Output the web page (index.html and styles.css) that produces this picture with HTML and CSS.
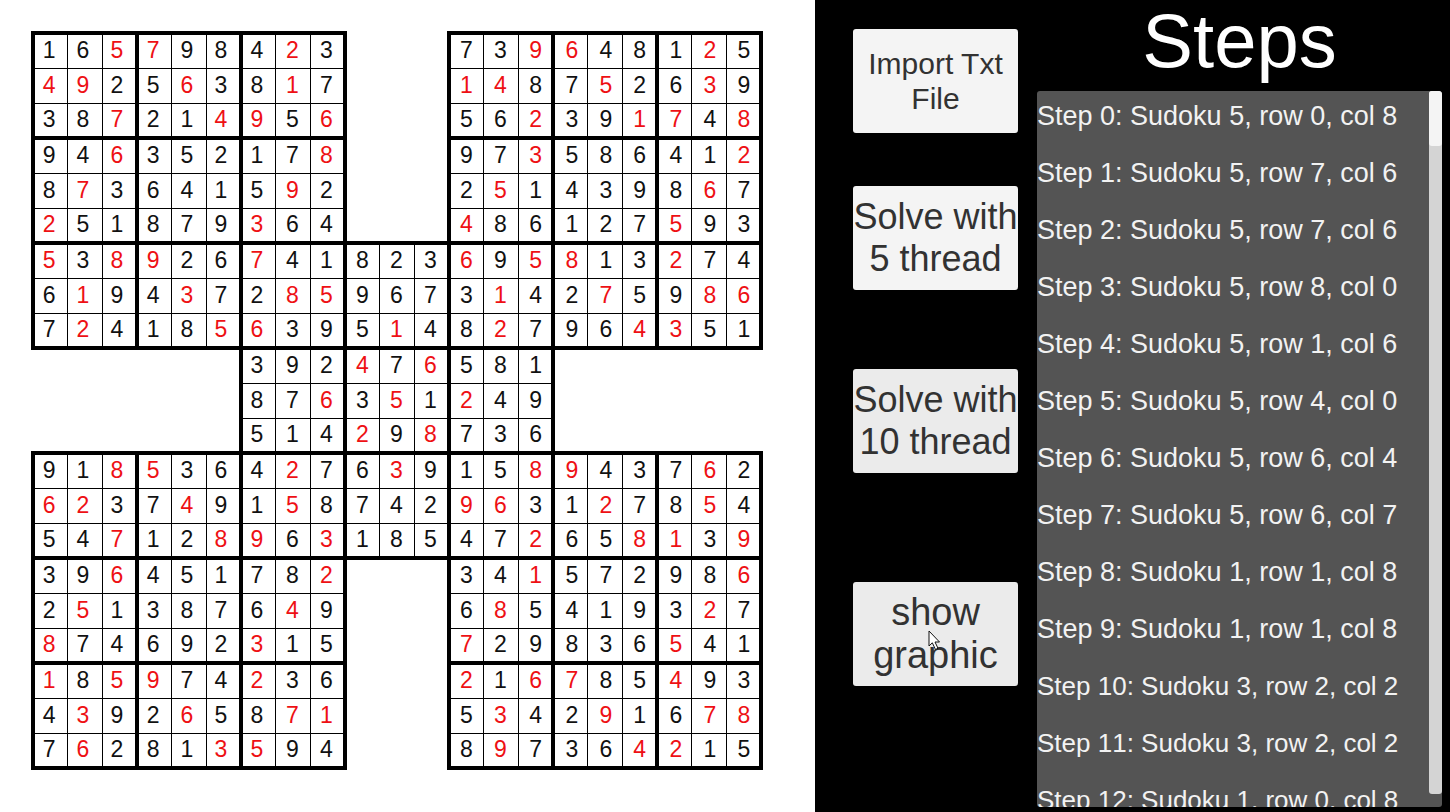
FILE: index.html
```html
<!DOCTYPE html>
<html lang="en">
<head>
<meta charset="utf-8">
<title>Samurai Sudoku</title>
<link rel="stylesheet" href="styles.css">
</head>
<body>
<main class="app">
  <section class="board" aria-label="Samurai sudoku board">
    <table class="sudoku"><tbody id="cells"></tbody></table>
  </section>
  <section class="panel">
    <div class="controls">
      <button type="button" class="btn btn-import">Import Txt<br>File</button>
      <button type="button" class="btn btn-five">Solve with<br>5 thread</button>
      <button type="button" class="btn btn-ten">Solve with<br>10 thread</button>
      <button type="button" class="btn btn-graphic">show<br>graphic
        <svg class="cursor" width="13" height="21" viewBox="0 0 13 21" aria-hidden="true"><path d="M1 1V16L4.300 12.800L7.500 19.500L10 18.300L7 12H11.500Z" fill="#fff" stroke="#111" stroke-width="1"/></svg>
      </button>
    </div>
    <div class="steps">
      <h1 class="title">Steps</h1>
      <div class="log">
        <ol class="list">
          <li>Step 0: Sudoku 5, row 0, col 8</li>
          <li>Step 1: Sudoku 5, row 7, col 6</li>
          <li>Step 2: Sudoku 5, row 7, col 6</li>
          <li>Step 3: Sudoku 5, row 8, col 0</li>
          <li>Step 4: Sudoku 5, row 1, col 6</li>
          <li>Step 5: Sudoku 5, row 4, col 0</li>
          <li>Step 6: Sudoku 5, row 6, col 4</li>
          <li>Step 7: Sudoku 5, row 6, col 7</li>
          <li>Step 8: Sudoku 1, row 1, col 8</li>
          <li>Step 9: Sudoku 1, row 1, col 8</li>
          <li class="long">Step 10: Sudoku 3, row 2, col 2</li>
          <li class="long">Step 11: Sudoku 3, row 2, col 2</li>
          <li class="long">Step 12: Sudoku 1, row 0, col 8</li>
        </ol>
        <div class="track"><div class="thumb"></div></div>
      </div>
    </div>
  </section>
</main>
<script src="board.js"></script>
</body>
</html>
```
FILE: styles.css
```css
* {
  box-sizing: border-box;
}

body {
  margin: 0;
  font-family: "Liberation Sans", Arial, sans-serif;
  font-kerning: none;
  background: #000;
}

.app {
  display: grid;
  grid-template-columns: 815fr 635fr;
  height: 100vh;
  overflow: hidden;
}

.board {
  background: #fff;
  padding: 31px 52px 0 31px;
}

.sudoku {
  width: 100%;
  table-layout: fixed;
  border-collapse: collapse;
}

.sudoku td {
  height: 35px;
  padding: 0 4px 2px 0;
  border: 1px solid #000;
  font-size: 23px;
  line-height: 26px;
  text-align: center;
  color: #111;
}

.sudoku td:nth-child(n+8) {
  padding: 0 1px 2px 0;
}

.sudoku td:nth-child(n+15) {
  padding: 0 0 2px 2px;
}

.sudoku td:nth-child(3n+1) {
  border-left: 4px solid #000;
}

.sudoku td:nth-child(3n) {
  border-right: 4px solid #000;
}

.sudoku tr:nth-child(3n+1) td {
  border-top: 4px solid #000;
}

.sudoku tr:nth-child(3n) td {
  border-bottom: 4px solid #000;
}

.sudoku tr td.blank {
  border: none;
}

.sudoku td.given {
  color: #ee1014;
}

.panel {
  display: grid;
  grid-template-columns: 165px 1fr;
  column-gap: 19px;
  padding: 0 8px 5px 38px;
  min-height: 0;
  background: #000;
}

.controls {
  display: flex;
  flex-direction: column;
  padding-top: 29px;
}

.btn {
  position: relative;
  flex: none;
  height: 104px;
  padding: 0;
  border: 0;
  border-radius: 3px;
  background: #ebebeb;
  color: #323232;
  font-family: inherit;
  font-size: 36px;
  line-height: 42px;
  white-space: nowrap;
}

.btn-import {
  background: #f4f4f4;
  font-size: 30px;
  line-height: 35px;
}

.btn-five {
  margin-top: 53px;
  background: #f4f4f4;
}

.btn-ten {
  margin-top: 79px;
}

.btn-graphic {
  margin-top: 109px;
  font-size: 38px;
  line-height: 43px;
}

.cursor {
  position: absolute;
  left: 75px;
  top: 48px;
}

.steps {
  display: flex;
  flex-direction: column;
  min-width: 0;
  min-height: 0;
}

.title {
  margin: 0 0 9px;
  font-size: 76px;
  font-weight: 400;
  line-height: 82px;
  text-align: center;
  color: #fff;
}

.log {
  display: flex;
  flex: 1;
  min-height: 0;
  border-radius: 3px;
  background: #545454;
  overflow: hidden;
}

.list {
  display: flex;
  flex: 1;
  flex-direction: column;
  gap: 6px;
  margin: 0;
  padding: 0;
  list-style: none;
  color: #f2f2f2;
  font-size: 27px;
  line-height: 51px;
  white-space: nowrap;
}

.list .long {
  font-size: 26px;
}

.track {
  width: 13px;
  margin-bottom: 13px;
  border-radius: 3px;
  background: #d4d4d4;
}

.thumb {
  height: 55px;
  border-radius: 3px;
  background: #f4f4f4;
}
```
FILE: board.js
```javascript
// One string per row; "." is an empty area, "*" marks the following digit as a given.
const rows = [
  "16*5*7984*23...73*9*6481*25",
  "*4*925*638*17...*1*487*526*39",
  "38*721*4*95*6...56*239*1*74*8",
  "94*635217*8...97*358641*2",
  "8*736415*92...2*514398*67",
  "*251879*364...*486127*593",
  "*53*8*926*741823*69*5*813*274",
  "6*194*372*8*59673*142*759*8*6",
  "7*2418*5*6395*148*2796*4*351",
  "......392*47*6581......",
  "......87*63*51*249......",
  "......514*29*8736......",
  "91*8*5364*276*3915*8*9437*62",
  "*6*237*491*58742*9*631*278*54",
  "54*712*8*96*318547*265*8*13*9",
  "39*645178*2...34*157298*6",
  "2*513876*49...6*854193*27",
  "*874692*315...*729836*541",
  "*18*5*974*236...*21*6*785*493",
  "4*392*658*7*1...5*342*916*7*8",
  "7*6281*3*594...8*9736*4*215"
];

const body = document.getElementById("cells");
for (const row of rows) {
  const tr = body.insertRow();
  for (const mark of row.match(/\*?[\d.]/g)) {
    const td = tr.insertCell();
    if (mark === ".") {
      td.className = "blank";
    } else {
      td.textContent = mark.slice(-1);
      if (mark[0] === "*") td.className = "given";
    }
  }
}
```
